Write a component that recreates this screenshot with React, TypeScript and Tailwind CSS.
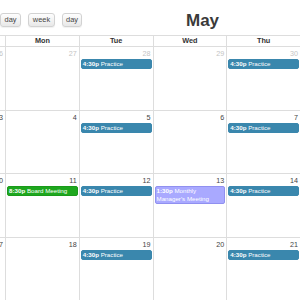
import React from "react";

type Ev = { time: string; title: React.ReactNode; color: "blue" | "green" | "purple" };

const weeks: { day: number; other: boolean; events?: Ev[] }[][] = [
  [
    { day: 26, other: true },
    { day: 27, other: true },
    { day: 28, other: true, events: [{ time: "4:30p", title: "Practice", color: "blue" }] },
    { day: 29, other: true },
    { day: 30, other: true, events: [{ time: "4:30p", title: "Practice", color: "blue" }] },
    { day: 1, other: false },
    { day: 2, other: false },
  ],
  [
    { day: 3, other: false },
    { day: 4, other: false },
    { day: 5, other: false, events: [{ time: "4:30p", title: "Practice", color: "blue" }] },
    { day: 6, other: false },
    { day: 7, other: false, events: [{ time: "4:30p", title: "Practice", color: "blue" }] },
    { day: 8, other: false },
    { day: 9, other: false },
  ],
  [
    { day: 10, other: false },
    { day: 11, other: false, events: [{ time: "8:30p", title: "Board Meeting", color: "green" }] },
    { day: 12, other: false, events: [{ time: "4:30p", title: "Practice", color: "blue" }] },
    {
      day: 13,
      other: false,
      events: [
        {
          time: "1:30p",
          title: (
            <>
              Monthly
              <br />
              Manager's Meeting
            </>
          ),
          color: "purple",
        },
      ],
    },
    { day: 14, other: false, events: [{ time: "4:30p", title: "Practice", color: "blue" }] },
    { day: 15, other: false },
    { day: 16, other: false },
  ],
  [
    { day: 17, other: false },
    { day: 18, other: false },
    { day: 19, other: false, events: [{ time: "4:30p", title: "Practice", color: "blue" }] },
    { day: 20, other: false },
    { day: 21, other: false, events: [{ time: "4:30p", title: "Practice", color: "blue" }] },
    { day: 22, other: false },
    { day: 23, other: false },
  ],
];

const days = ["Sun", "Mon", "Tue", "Wed", "Thu", "Fri", "Sat"];

function EventBar({ ev }: { ev: Ev }) {
  const cls =
    ev.color === "blue"
      ? "bg-[#3a87ad] border-[#3a87ad]"
      : ev.color === "green"
      ? "bg-[#1ea71e] border-[#1a9a1a]"
      : "bg-[#a9a9ff] border-[#9090f0]";
  return (
    <div
      className={`ml-[1px] mr-[1px] rounded-[2px] border text-white text-[6.2px] leading-[8px] px-[1px] ${cls}`}
    >
      <span className="font-bold">{ev.time}</span> {ev.title}
    </div>
  );
}

function Btn({ label, w }: { label: string; w: string }) {
  return (
    <div
      className={`${w} h-[14px] flex items-center justify-center rounded-[3px] border border-[#d2d2d2] bg-gradient-to-b from-[#fefefe] to-[#e8e8e8] text-[7.4px] text-[#444] shadow-[0_1px_1px_rgba(0,0,0,0.06)]`}
    >
      {label}
    </div>
  );
}

export default function App() {
  return (
    <div
      className="w-[300px] h-[300px] overflow-hidden bg-white"
      style={{ fontFamily: '"Liberation Sans", Arial, sans-serif' }}
    >
      <div className="h-[35px] flex items-start">
        <div className="flex items-start gap-[7px] pt-[13px] ml-[0px]">
          <Btn label="day" w="w-[21px]" />
          <Btn label="week" w="w-[27px]" />
          <Btn label="day" w="w-[20px]" />
        </div>
        <div className="ml-[104px] mt-[12px] text-[17px] leading-[17px] font-bold text-[#3a3a3a]">May</div>
      </div>
      <div className="ml-[-67.75px] w-[516.25px]">
        <div className="grid grid-cols-[repeat(7,73.75px)] h-[12px] border-t border-b border-[#dddddd]">
          {days.map((d) => (
            <div
              key={d}
              className="border-r border-[#dddddd] text-center text-[7.3px] leading-[10px] font-bold text-[#333]"
            >
              {d}
            </div>
          ))}
        </div>
        {weeks.map((wk, i) => (
          <div
            key={i}
            className="grid grid-cols-[repeat(7,73.75px)] h-[63.6px] border-b border-[#dddddd]"
          >
            {wk.map((c) => (
              <div key={c.day} className="border-r border-[#dddddd] flex flex-col">
                <div
                  className={`text-right pr-[2px] pt-[2px] text-[7.2px] leading-[9px] h-[12px] ${
                    c.other ? "text-[#c4c4c4]" : "text-[#444]"
                  }`}
                >
                  {c.day}
                </div>
                <div className="flex flex-col gap-[1px]">
                  {c.events?.map((ev, k) => (
                    <EventBar key={k} ev={ev} />
                  ))}
                </div>
              </div>
            ))}
          </div>
        ))}
      </div>
    </div>
  );
}
